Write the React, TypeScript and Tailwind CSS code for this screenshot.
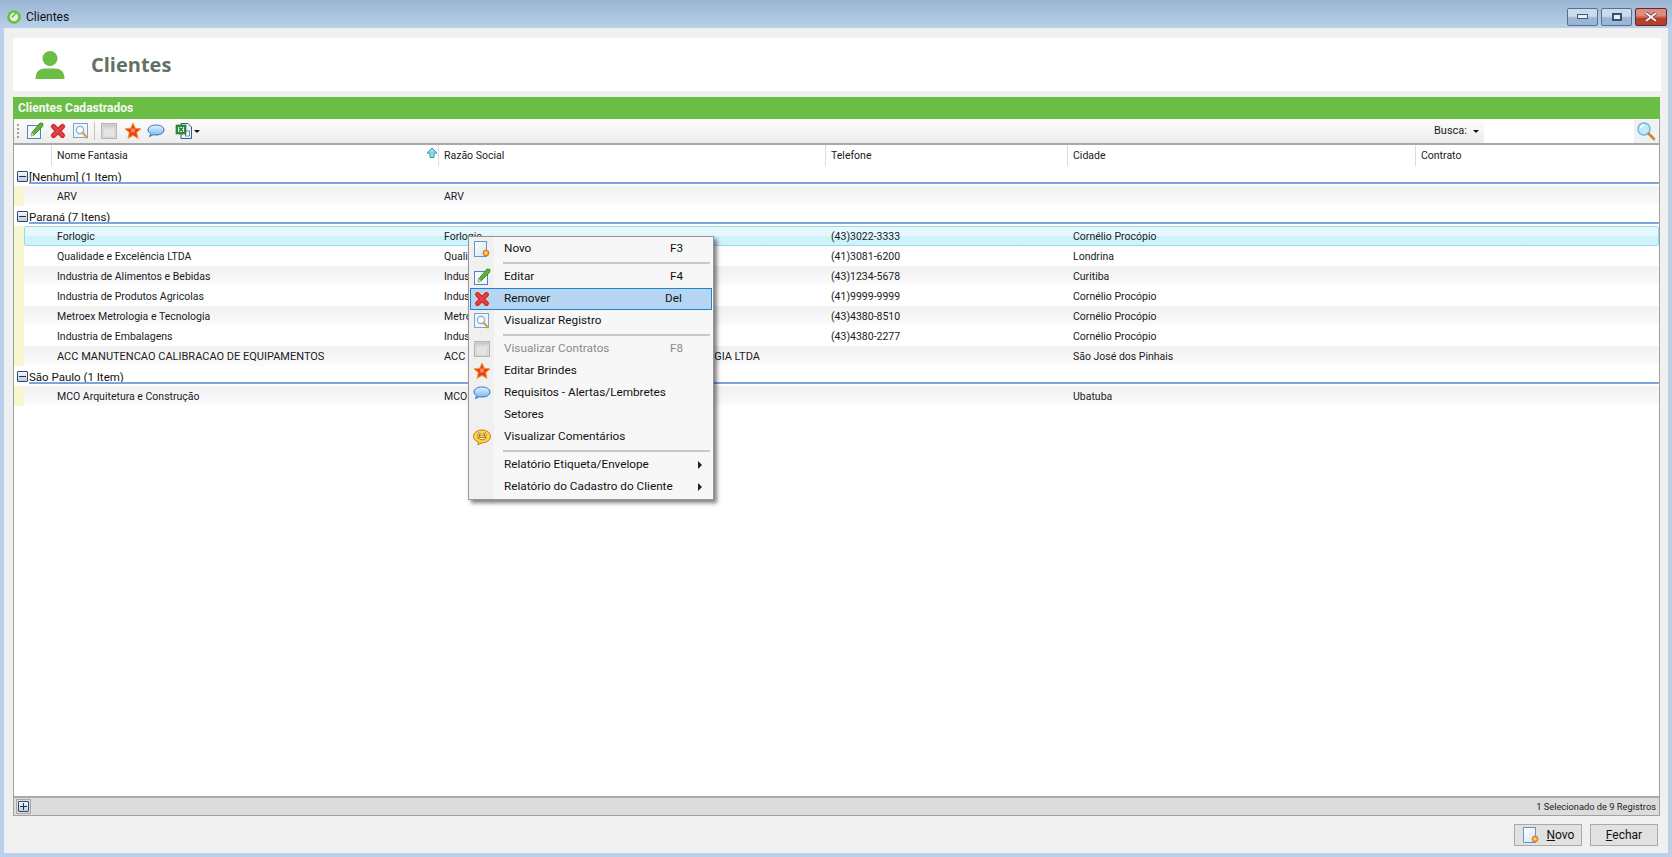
import React from "react";

const font = "font-['Roboto','Noto_Sans',sans-serif]";

function PageIcon() {
  return (
    <svg width="18" height="18" viewBox="0 0 18 18">
      <defs>
        <linearGradient id="pg" x1="0" y1="0" x2="1" y2="1">
          <stop offset="0" stopColor="#ffffff" />
          <stop offset="1" stopColor="#d5e3f2" />
        </linearGradient>
      </defs>
      <rect x="1.5" y="1.5" width="12" height="15" fill="url(#pg)" stroke="#6b93bf" />
      <circle cx="13" cy="13" r="3" fill="#f2a93b" stroke="#d9792b" strokeWidth="1" />
      <circle cx="13" cy="13" r="1" fill="#ffe9a8" />
    </svg>
  );
}

function EditIcon() {
  return (
    <svg width="18" height="18" viewBox="0 0 18 18">
      <rect x="1.5" y="3.5" width="13" height="13" fill="#f4f8fc" stroke="#4d86bd" />
      <path d="M5 14 L6 10.5 L14 1 L17 1.5 L16.5 4.5 L8 13 Z" fill="#5cb531" stroke="#2a7d1c" strokeWidth="0.8" />
      <path d="M5 14 L6 11 L8 13 Z" fill="#f3e3b5" />
    </svg>
  );
}

function RemoveIcon() {
  return (
    <svg width="18" height="18" viewBox="0 0 18 18">
      <path d="M4.5 4.5 L13.5 13.5 M13.5 4.5 L4.5 13.5" stroke="#f0c6c6" strokeWidth="6" strokeLinecap="round" />
      <path d="M4.5 4.5 L13.5 13.5 M13.5 4.5 L4.5 13.5" stroke="#b3262a" strokeWidth="4.8" strokeLinecap="round" />
      <path d="M4.5 4.5 L13.5 13.5 M13.5 4.5 L4.5 13.5" stroke="#ea3f40" strokeWidth="2.8" strokeLinecap="round" />
    </svg>
  );
}

function ViewIcon() {
  return (
    <svg width="18" height="18" viewBox="0 0 18 18">
      <rect x="1.5" y="1.5" width="14" height="14" fill="#eef4fb" stroke="#7ea5cd" />
      <circle cx="8" cy="8" r="3.6" fill="#fff" stroke="#8ba9c6" strokeWidth="1.2" />
      <path d="M10.6 10.6 L15 15.5" stroke="#d79a3c" strokeWidth="2" strokeLinecap="round" />
    </svg>
  );
}

function ContractIcon() {
  return (
    <svg width="18" height="18" viewBox="0 0 18 18">
      <rect x="1.5" y="1.5" width="15" height="15" fill="#dcdcdc" stroke="#b3b3b3" />
      <rect x="2.5" y="2.5" width="13" height="2" fill="#c7c7c7" />
      <rect x="3.5" y="6" width="11" height="9" fill="#e4e4e4" stroke="#cfcfcf" strokeWidth="0.6" />
    </svg>
  );
}

function StarIcon() {
  return (
    <svg width="18" height="18" viewBox="0 0 18 18">
      <path d="M9 1 L11.3 6.2 L17 6.8 L12.7 10.6 L14 16.4 L9 13.4 L4 16.4 L5.3 10.6 L1 6.8 L6.7 6.2 Z" fill="#ea3f1c" stroke="#f0a02c" strokeWidth="1" strokeLinejoin="round" />
      <circle cx="9" cy="8.5" r="2.2" fill="#ff8a5a" />
    </svg>
  );
}

function BubbleIcon() {
  return (
    <svg width="18" height="18" viewBox="0 0 18 18">
      <defs>
        <linearGradient id="bb" x1="0" y1="0" x2="0" y2="1">
          <stop offset="0" stopColor="#e4f2ff" />
          <stop offset="1" stopColor="#6db2f0" />
        </linearGradient>
      </defs>
      <path d="M9 3 C13.6 3 17 5 17 8 C17 11 13.6 13 9 13 C8 13 7 12.9 6.2 12.7 L2.6 14.6 L3.6 11.6 C2 10.6 1 9.4 1 8 C1 5 4.4 3 9 3 Z" fill="url(#bb)" stroke="#2c74bf" strokeWidth="1" />
    </svg>
  );
}

function SmileIcon() {
  return (
    <svg width="18" height="18" viewBox="0 0 18 18">
      <path d="M9 2 C13.6 2 17.5 4.6 17.5 8.5 C17.5 12.2 13.6 14.8 9 14.8 L5 16.8 L5.4 14 C2.6 13 0.5 11 0.5 8.5 C0.5 4.6 4.4 2 9 2 Z" fill="#fbd53c" stroke="#c8771e" strokeWidth="1" />
      <circle cx="6.2" cy="6.6" r="1.7" fill="#fff" stroke="#8a4d10" strokeWidth="0.6" />
      <circle cx="11.8" cy="6.6" r="1.7" fill="#fff" stroke="#8a4d10" strokeWidth="0.6" />
      <circle cx="6.4" cy="7" r="0.7" fill="#3a2508" />
      <circle cx="11.6" cy="7" r="0.7" fill="#3a2508" />
      <path d="M4.6 9.6 Q9 14 13.4 9.6 Z" fill="#fff" stroke="#a85a18" strokeWidth="0.8" />
    </svg>
  );
}

function ExcelIcon() {
  return (
    <svg width="18" height="18" viewBox="0 0 18 18">
      <path d="M6 1.5 H13 L16.5 5 V16.5 H6 Z" fill="#eef4fb" stroke="#38597f" />
      <rect x="10.5" y="9" width="4" height="5" fill="#fff" stroke="#38597f" strokeWidth="0.7" />
      <rect x="1" y="3" width="10" height="9" fill="#2f8f3b" stroke="#1d6b2a" strokeWidth="0.6" />
      <rect x="3" y="5" width="6" height="5" fill="#e5f3e3" />
      <path d="M4 5.5 L8 9.5 M8 5.5 L4 9.5" stroke="#1d6b2a" strokeWidth="1.2" />
    </svg>
  );
}

function SearchIcon() {
  return (
    <svg width="20" height="20" viewBox="0 0 20 20">
      <circle cx="8" cy="8" r="6" fill="#c3eafa" stroke="#6cb6df" strokeWidth="1.5" />
      <path d="M4.5 7 A4 4 0 0 1 8 4" stroke="#fff" strokeWidth="1.3" fill="none" />
      <path d="M12.5 12.5 L18 18" stroke="#c98a2e" strokeWidth="2.6" strokeLinecap="round" />
    </svg>
  );
}

function Expander({ sign = "-" }: { sign?: "-" | "+" }) {
  return (
    <span className="w-[11px] h-[11px] border border-[#2f4a6d] rounded-[1px] bg-gradient-to-b from-[#f4f7fb] to-[#bccde2] flex items-center justify-center relative shrink-0">
      <span className="w-[7px] h-px bg-[#1d3350]" />
      {sign === "+" && <span className="absolute w-px h-[7px] bg-[#1d3350]" />}
    </span>
  );
}

const colsPlain = "grid grid-cols-[33px_387px_387px_242px_348px_1fr]";
const colsSel = "grid grid-cols-[32px_387px_387px_242px_348px_1fr]";

function Row({ v, kind, caps }: { v: string[]; kind: "white" | "gray" | "sel"; caps?: boolean }) {
  const bg = kind === "gray" ? "bg-gradient-to-b from-[#f1f1f1] to-[#fbfbfb]" : "bg-white";
  return (
    <div className="flex h-5">
      <div className="w-[10px] bg-[#f7f8d2] shrink-0" />
      <div
        className={
          kind === "sel"
            ? `${colsSel} flex-1 border border-[#8fdcf3] rounded-[2px] bg-gradient-to-b from-[#e7f8fd] from-50% to-[#d0f2fb] to-50% items-center text-[#1a1a24]`
            : `${colsPlain} flex-1 ${bg} items-center text-[#1a1a24]`
        }
      >
        <span />
        {v.map((t, i) => (
          <span key={i} className={`whitespace-nowrap translate-y-[1px] ${caps && i < 2 ? "text-[11px]" : ""}`}>{t}</span>
        ))}
      </div>
    </div>
  );
}

function Group({ label }: { label: string }) {
  return (
    <div className="h-5 relative flex items-center pl-[3px] gap-[1px] bg-white text-[#111]">
      <Expander />
      <span className="leading-4 translate-y-[1px] text-[11.5px]">{label}</span>
      <div className="absolute left-[15px] right-0 bottom-[2px] h-[2px] bg-[#7ea4dc]" />
    </div>
  );
}

function MenuItem({
  icon, label, key2, disabled, hot, arrow,
}: { icon?: React.ReactNode; label: string; key2?: string; disabled?: boolean; hot?: boolean; arrow?: boolean }) {
  return (
    <div
      className={`h-[22px] relative flex items-center border ${hot ? "border-[#1f83d0] bg-[#b5d5f1]" : "border-transparent"} ${disabled ? "text-[#8a8a8a]" : "text-[#111]"}`}
    >
      <span className="w-[20px] ml-px flex items-center justify-center shrink-0">{icon}</span>
      <span className="ml-[12px] flex-1 whitespace-nowrap">{label}</span>
      {key2 && <span className={key2 === "Del" ? "w-[46px]" : "w-[41px]"}>{key2}</span>}
      {arrow && (
        <span className="w-0 h-0 mr-[9px] border-y-[4px] border-y-transparent border-l-[4px] border-l-[#222]" />
      )}
    </div>
  );
}

function ContextMenu() {
  return (
    <div className="absolute left-[468px] top-[236px] w-[246px] h-[264px] bg-[#f7f7f7] border border-[#979797] shadow-[3px_3px_4px_rgba(0,0,0,0.5)] text-[11.75px] z-10 py-[1px] px-px">
      <div className="absolute left-0 top-0 bottom-0 w-[25px] bg-[#f0f0f0]" />
      <div className="relative">
        <MenuItem icon={<PageIcon />} label="Novo" key2="F3" />
        <div className="h-[2px] my-[2px] ml-[33px] mr-[2px] bg-[#c8c8c8]" />
        <MenuItem icon={<EditIcon />} label="Editar" key2="F4" />
        <MenuItem icon={<RemoveIcon />} label="Remover" key2="Del" hot />
        <MenuItem icon={<ViewIcon />} label="Visualizar Registro" />
        <div className="h-[2px] my-[2px] ml-[33px] mr-[2px] bg-[#c8c8c8]" />
        <MenuItem icon={<ContractIcon />} label="Visualizar Contratos" key2="F8" disabled />
        <MenuItem icon={<StarIcon />} label="Editar Brindes" />
        <MenuItem icon={<BubbleIcon />} label="Requisitos - Alertas/Lembretes" />
        <MenuItem label="Setores" />
        <MenuItem icon={<SmileIcon />} label="Visualizar Comentários" />
        <div className="h-[2px] my-[2px] ml-[33px] mr-[2px] bg-[#c8c8c8]" />
        <MenuItem label="Relatório Etiqueta/Envelope" arrow />
        <MenuItem label="Relatório do Cadastro do Cliente" arrow />
      </div>
    </div>
  );
}

function WinButton({ children, close }: { children: React.ReactNode; close?: boolean }) {
  return (
    <div
      className={`h-[18px] flex items-center justify-center rounded-[2px] border ${
        close
          ? "w-[32px] border-[#5f2a35] bg-gradient-to-b from-[#dd8b7d] from-40% to-[#b93f2b] to-60%"
          : "w-[31px] border-[#56708f] bg-gradient-to-b from-[#c9dbed] from-45% to-[#9ab6d4] to-55%"
      }`}
    >
      {children}
    </div>
  );
}

function ToolSep() {
  return <span className="w-px h-[18px] bg-[#c4c4c4] mx-[4px]" />;
}

export default function App() {
  return (
    <div className={`w-[1672px] h-[857px] overflow-hidden relative flex flex-col bg-[#b9d1ea] text-[10.5px] ${font}`}>
      {/* Title bar */}
      <div className="h-[28px] shrink-0 flex items-center pl-[7px] pt-[5px] bg-gradient-to-b from-[#9ab6d3] to-[#b8d0e9]">
        <svg width="14" height="14" viewBox="0 0 14 14">
          <circle cx="7" cy="7" r="5.5" fill="#e6f3dc" stroke="#6bbd45" strokeWidth="2.6" />
          <path d="M5 7.5 L7 5 L9 3" stroke="#6bbd45" strokeWidth="1.6" fill="none" />
        </svg>
        <span className="ml-[5px] text-[12px] text-[#111]">Clientes</span>
        <div className="ml-auto mr-[5px] flex gap-[3px]">
          <WinButton>
            <span className="w-[11px] h-[5px] bg-[#e8eef5] border border-[#47586d]" />
          </WinButton>
          <WinButton>
            <span className="w-[10px] h-[8px] border-2 border-[#3e5068] bg-[#e4ecf5]" />
          </WinButton>
          <WinButton close>
            <svg width="14" height="10" viewBox="0 0 14 10">
              <path d="M2 1 L12 9 M12 1 L2 9" stroke="#5d2a2a" strokeWidth="3.4" />
              <path d="M2 1 L12 9 M12 1 L2 9" stroke="#f2f2f2" strokeWidth="2.2" />
            </svg>
          </WinButton>
        </div>
      </div>

      {/* Client area */}
      <div className="mx-[4px] mb-[4px] flex-1 min-h-0 bg-[#f0f0f0] flex flex-col pl-[9px] pr-[8px]">
        {/* Page header */}
        <div className="mt-[10px] h-[53px] shrink-0 bg-white flex items-center -mr-[1px]">
          <svg className="ml-[22px]" width="30" height="30" viewBox="0 0 30 30">
            <circle cx="15" cy="8.5" r="7.5" fill="#6abd45" />
            <path d="M0.5 29 C0.5 22 4 18.5 10 18.5 H20 C26 18.5 29.5 22 29.5 29 Z" fill="#6abd45" />
          </svg>
          <span className="ml-[26px] pt-px text-[20px] font-bold text-[#5f7363] font-['Open_Sans',sans-serif]">Clientes</span>
        </div>

        {/* Green band */}
        <div className="mt-[6px] h-[22px] shrink-0 bg-[#6abd45] flex items-center pl-[5px] text-[12px] font-bold text-[#f4fbef]">
          Clientes Cadastrados
        </div>

        {/* Grid panel */}
        <div className="flex-1 min-h-0 flex flex-col border-l border-r border-b border-[#a0a0a0] bg-white">
          {/* Toolbar */}
          <div className="h-[26px] shrink-0 flex items-center pl-[3px] bg-gradient-to-b from-[#fdfdfd] to-[#ececec] border-b-2 border-[#a9a9a9]">
            <span className="w-[2px] h-[14px] mr-[7px] border-l-2 border-dotted border-[#a0a0a0]" />
            <span className="flex gap-[5px] items-center"><EditIcon /><RemoveIcon /><ViewIcon /></span>
            <ToolSep />
            <span className="flex gap-[5px] items-center ml-[1px]"><ContractIcon /><span className="ml-[1px]"><StarIcon /></span><BubbleIcon /></span>
            <span className="ml-[1px]"><ToolSep /></span>
            <span className="ml-[1px]"><ExcelIcon /></span>
            <span className="ml-[1px] w-0 h-0 border-x-[3px] border-x-transparent border-t-[3px] border-t-[#111]" />
            <span className="ml-auto text-[11px] text-[#1a1a24]">Busca:</span>
            <span className="ml-[6px] w-0 h-0 border-x-[3px] border-x-transparent border-t-[3px] border-t-[#111]" />
            <div className="ml-[5px] w-[150px] h-[23px] bg-white" />
            <div className="w-[24px] h-[23px] flex items-center justify-center bg-[#f1f1f1] mr-px"><SearchIcon /></div>
          </div>

          {/* Column header */}
          <div className="h-[21px] shrink-0 grid grid-cols-[37px_387px_387px_242px_348px_1fr] items-center text-[#1a1a24] bg-white relative">
            <span />
            {["Nome Fantasia", "Razão Social", "Telefone", "Cidade", "Contrato"].map((c) => (
              <span key={c} className="h-full flex items-center pl-[5px] border-l border-[#dcdcdc]">{c}</span>
            ))}
            <svg className="absolute left-[412px] top-[2px]" width="12" height="12" viewBox="0 0 12 12">
              <path d="M6 1 L11 6 H8 V10.5 H4 V6 H1 Z" fill="#8fe0e6" stroke="#3b9aa8" strokeWidth="1" />
            </svg>
          </div>

          {/* Rows */}
          <div className="flex-1 min-h-0 bg-white">
            <Group label="[Nenhum] (1 Item)" />
            <Row kind="gray" v={["ARV", "ARV", "", ""]} />
            <Group label="Paraná (7 Itens)" />
            <Row kind="sel" v={["Forlogic", "Forlogic", "(43)3022-3333", "Cornélio Procópio"]} />
            <Row kind="white" v={["Qualidade e Excelência LTDA", "Qualidade e Excelência LTDA", "(41)3081-6200", "Londrina"]} />
            <Row kind="gray" v={["Industria de Alimentos e Bebidas", "Industria de Alimentos e Bebidas", "(43)1234-5678", "Curitiba"]} />
            <Row kind="white" v={["Industria de Produtos Agricolas", "Industria de Produtos Agricolas", "(41)9999-9999", "Cornélio Procópio"]} />
            <Row kind="gray" v={["Metroex Metrologia e Tecnologia", "Metroex Metrologia e Tecnologia", "(43)4380-8510", "Cornélio Procópio"]} />
            <Row kind="white" v={["Industria de Embalagens", "Industria de Embalagens", "(43)4380-2277", "Cornélio Procópio"]} />
            <Row kind="gray" caps v={["ACC MANUTENCAO CALIBRACAO DE EQUIPAMENTOS", "ACC MANUTENCAO CALIBRACAO DE EQUIPAMENTOS GIA LTDA", "", "São José dos Pinhais"]} />
            <Group label="São Paulo (1 Item)" />
            <Row kind="gray" v={["MCO Arquitetura e Construção", "MCO Arquitetura e Construção", "", "Ubatuba"]} />
          </div>

          {/* Footer of grid */}
          <div className="h-[19px] shrink-0 border-t-2 border-[#a9a9a9] bg-[#dcdcdc] flex items-center pl-[2px] pr-[3px]">
            <span className="p-px border border-[#a9a9a9] flex"><Expander sign="+" /></span>
            <span className="ml-auto text-[9.3px] text-[#222]">1 Selecionado de 9 Registros</span>
          </div>
        </div>

        {/* Buttons */}
        <div className="h-[37px] shrink-0 flex items-center justify-end gap-[8px] pr-[2px]">
          <button className="w-[68px] h-[22px] border border-[#a9a9a9] bg-[#e1e1e1] flex items-center justify-center gap-[7px] text-[12px] text-[#111]">
            <PageIcon />
            <span><u>N</u>ovo</span>
          </button>
          <button className="w-[68px] h-[22px] border border-[#a9a9a9] bg-[#e1e1e1] flex items-center justify-center text-[12px] text-[#111]">
            <span><u>F</u>echar</span>
          </button>
        </div>
      </div>

      <ContextMenu />
    </div>
  );
}
